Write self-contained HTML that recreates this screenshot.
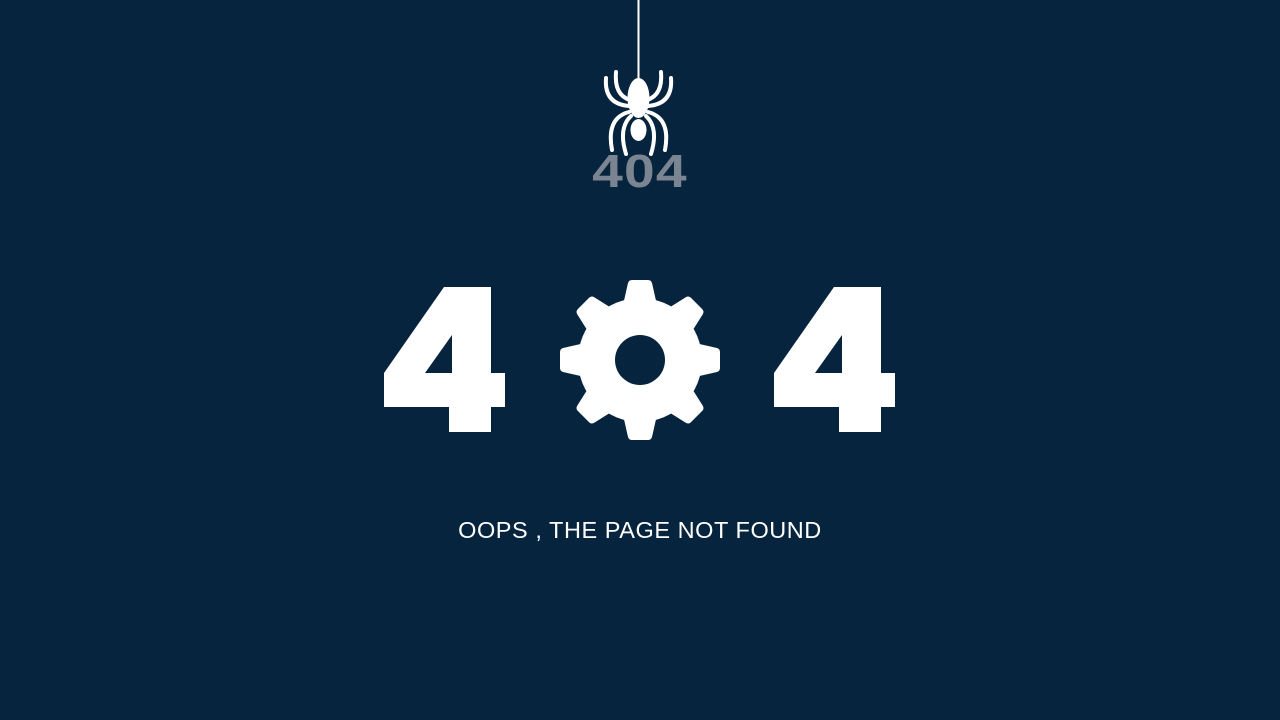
<!DOCTYPE html>
<html><head><style>
html,body{margin:0;padding:0;background:#06243d;width:1280px;height:720px;overflow:hidden;font-family:"Liberation Sans",sans-serif}
.t{position:absolute;left:0;width:1280px;text-align:center;color:#fff}
</style></head><body>
<svg width="1280" height="720" style="position:absolute;left:0;top:0">
<line x1="638.5" y1="0" x2="638.5" y2="80" stroke="#fff" stroke-width="2"/>
<g fill="#fff">
<ellipse cx="638.5" cy="98" rx="11" ry="20"/>
<ellipse cx="638.5" cy="130" rx="8" ry="11"/>
</g>
<g stroke="#fff" stroke-width="4" fill="none" stroke-linecap="round">
<path d="M630 100 Q614 95 616 72"/>
<path d="M647 100 Q663 95 661 72"/>
<path d="M629 106 Q604 104 606 78"/>
<path d="M648 106 Q673 104 671 78"/>
<path d="M629 112 Q606 118 612 150"/>
<path d="M648 112 Q671 118 665 150"/>
<path d="M631 116 Q618 128 626 154"/>
<path d="M646 116 Q659 128 651 154"/>
</g>
<text x="640" y="187" text-anchor="middle" font-family="Liberation Sans" font-weight="bold" font-size="46" letter-spacing="1" fill="#7a8591" transform="translate(640,0) scale(1.2,1) translate(-640,0)">404</text>
<path fill="#fff" d="M444 287 L491 287 L491 373 L505 373 L505 407 L491 407 L491 432 L449 432 L449 407 L384 407 L384 373 Z M452 335 L452 373 L425 373 Z" fill-rule="evenodd"/>
<path fill="#fff" d="M834 287 L881 287 L881 373 L895 373 L895 407 L881 407 L881 432 L839 432 L839 407 L774 407 L774 373 Z M842 335 L842 373 L815 373 Z" fill-rule="evenodd"/>
<g transform="translate(640,360)" fill="#fff">
<mask id="m"><rect x="-100" y="-100" width="200" height="200" fill="#fff"/><circle r="25" fill="#000"/></mask>
<g mask="url(#m)">
<circle r="62"/>
<g id="t"><path d="M-17 -55 L-12 -77 Q-11 -80 -8 -80 L8 -80 Q11 -80 12 -77 L17 -55 Z"/></g>
<use href="#t" transform="rotate(45)"/><use href="#t" transform="rotate(90)"/><use href="#t" transform="rotate(135)"/>
<use href="#t" transform="rotate(180)"/><use href="#t" transform="rotate(225)"/><use href="#t" transform="rotate(270)"/><use href="#t" transform="rotate(315)"/>
</g></g>
</svg>
<div class="t" style="top:517px;font-size:23.5px;letter-spacing:0.55px">OOPS , THE PAGE NOT FOUND</div>
</body></html>
